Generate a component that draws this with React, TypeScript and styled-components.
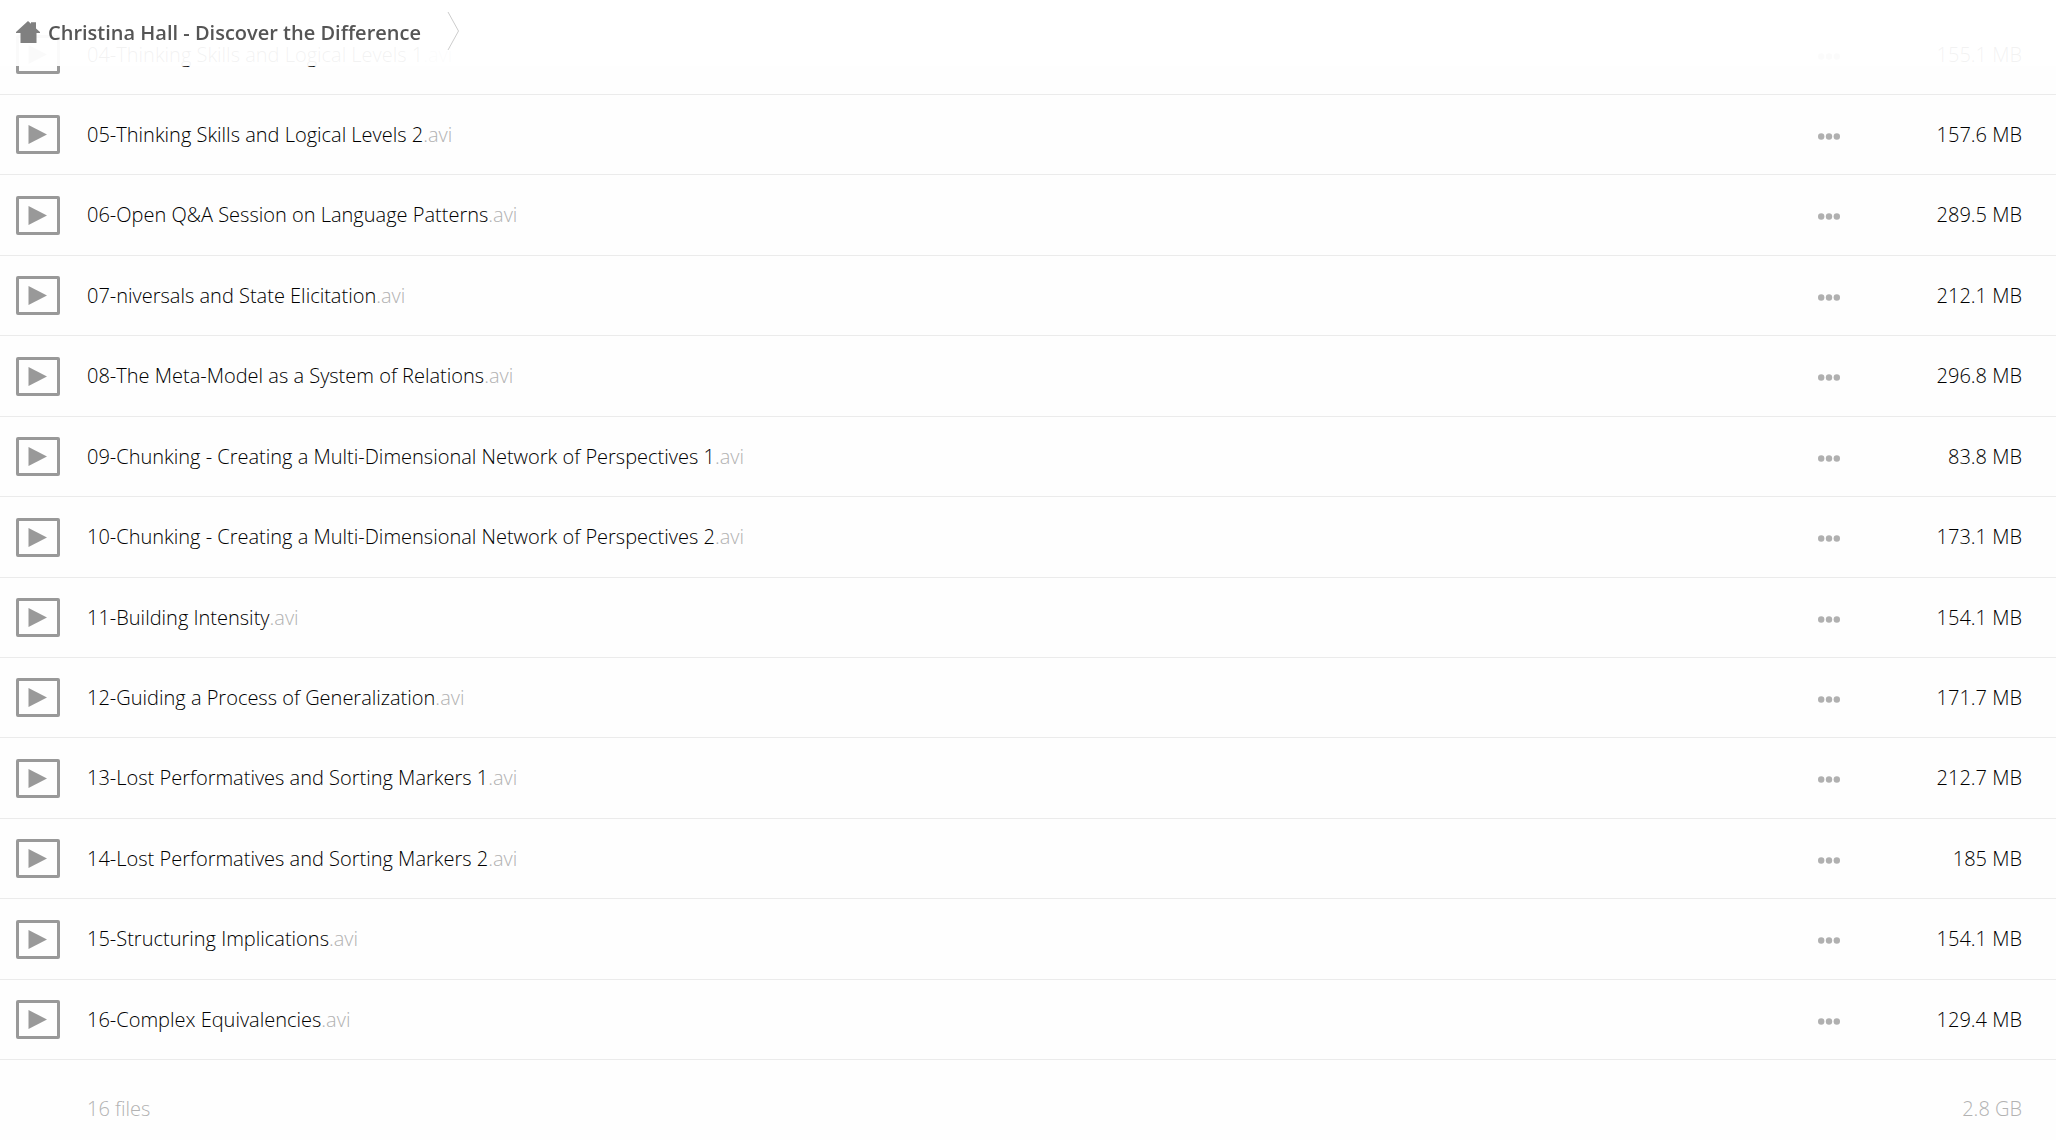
import React from 'react';
import styled, { createGlobalStyle } from 'styled-components';

const GlobalStyle = createGlobalStyle`
  * {
    box-sizing: border-box;
  }

  body {
    margin: 0;
    background: #fefefe;
    color: #000;
    font-family: 'Open Sans', 'Noto Sans', sans-serif;
    font-size: 20px;
    font-weight: 300;
    line-height: 28px;
  }
`;

const Header = styled.header`
  position: fixed;
  top: 0;
  left: 0;
  right: 0;
  z-index: 1;
  height: 66px;
  padding: 12px 16px;
  background: rgba(255, 255, 255, 0.95);
`;

const Breadcrumb = styled.nav`
  display: flex;
  align-items: flex-start;
  gap: 26px;
`;

const Crumb = styled.a`
  display: flex;
  align-items: center;
  gap: 8px;
  padding-top: 7px;
  color: #555;
  font-weight: 600;
  text-decoration: none;
`;

const Main = styled.main`
  padding-top: 15px;
`;

const FileTable = styled.table`
  width: 100%;
  table-layout: fixed;
  border-collapse: separate;
  border-spacing: 0;
`;

const IconColumn = styled.col`
  width: 87px;
`;

const MenuColumn = styled.col`
  width: 60px;
`;

const SizeColumn = styled.col`
  width: 197px;
`;

const FileRow = styled.tr`
  height: 80px;

  &:nth-child(3),
  &:nth-child(5n),
  &:nth-child(5n + 7) {
    height: 81px;
  }

  > td {
    border-bottom: 1px solid #ebebeb;
  }
`;

const SummaryRow = styled.tr`
  height: 98px;
  color: #b2b2b2;
`;

const Cell = styled.td<{ $align?: 'left' | 'center' | 'right' }>`
  padding: 0;
  text-align: ${({ $align = 'left' }) => $align};
  vertical-align: middle;
  white-space: nowrap;
`;

const IconCell = styled(Cell)`
  padding-left: 16px;
`;

const SizeCell = styled(Cell)`
  padding-right: 34px;
`;

const Extension = styled.span`
  color: #b2b2b2;
`;

const MenuButton = styled.button`
  display: inline-flex;
  align-items: flex-end;
  justify-content: center;
  width: 44px;
  height: 32px;
  padding: 0 0 11px;
  border: 0;
  background: none;
  cursor: pointer;
  vertical-align: middle;
`;

const Glyph = styled.svg`
  display: block;
  flex: none;
`;

const HomeIcon = () => (
  <Glyph width="24" height="24" viewBox="0 0 24 24" fill="#808080" aria-hidden="true">
    <path d="M12 0 15 2.7V1.3h5v6.2L24 11v1h-3.5v10h-16V12H0v-1z" />
  </Glyph>
);

const Separator = () => (
  <Glyph width="13" height="39" viewBox="0 0 13 39" fill="none" stroke="#ccc" aria-hidden="true">
    <path d="M1 0 11.5 19 1 38" />
  </Glyph>
);

const VideoIcon = () => (
  <Glyph width="44" height="39" viewBox="0 0 44 39" aria-hidden="true">
    <rect x="1.5" y="1.5" width="41" height="36" rx="0.5" fill="none" stroke="#999" strokeWidth="3" />
    <path d="M12.5 10 31 19.5 12.5 29z" fill="#999" />
  </Glyph>
);

const DotsIcon = () => (
  <Glyph width="22" height="7" viewBox="0 0 22 7" fill="#b0b0b0" aria-hidden="true">
    <circle cx="3.2" cy="3.5" r="3.2" />
    <circle cx="11" cy="3.5" r="3.2" />
    <circle cx="18.8" cy="3.5" r="3.2" />
  </Glyph>
);

const files = [
  { name: '04-Thinking Skills and Logical Levels 1', size: '155.1 MB' },
  { name: '05-Thinking Skills and Logical Levels 2', size: '157.6 MB' },
  { name: '06-Open Q&A Session on Language Patterns', size: '289.5 MB' },
  { name: '07-niversals and State Elicitation', size: '212.1 MB' },
  { name: '08-The Meta-Model as a System of Relations', size: '296.8 MB' },
  { name: '09-Chunking - Creating a Multi-Dimensional Network of Perspectives 1', size: '83.8 MB' },
  { name: '10-Chunking - Creating a Multi-Dimensional Network of Perspectives 2', size: '173.1 MB' },
  { name: '11-Building Intensity', size: '154.1 MB' },
  { name: '12-Guiding a Process of Generalization', size: '171.7 MB' },
  { name: '13-Lost Performatives and Sorting Markers 1', size: '212.7 MB' },
  { name: '14-Lost Performatives and Sorting Markers 2', size: '185 MB' },
  { name: '15-Structuring Implications', size: '154.1 MB' },
  { name: '16-Complex Equivalencies', size: '129.4 MB' },
];

export default function App() {
  return (
    <>
      <GlobalStyle />
      <Header>
        <Breadcrumb aria-label="Breadcrumb">
          <Crumb href="#">
            <HomeIcon />
            Christina Hall - Discover the Difference
          </Crumb>
          <Separator />
        </Breadcrumb>
      </Header>
      <Main>
        <FileTable>
          <colgroup>
            <IconColumn />
            <col />
            <MenuColumn />
            <SizeColumn />
          </colgroup>
          <tbody>
            {files.map(({ name, size }) => (
              <FileRow key={name}>
                <IconCell>
                  <VideoIcon />
                </IconCell>
                <Cell>
                  {name}
                  <Extension>.avi</Extension>
                </Cell>
                <Cell $align="center">
                  <MenuButton type="button" aria-label="File actions">
                    <DotsIcon />
                  </MenuButton>
                </Cell>
                <SizeCell $align="right">{size}</SizeCell>
              </FileRow>
            ))}
          </tbody>
          <tfoot>
            <SummaryRow>
              <Cell />
              <Cell colSpan={2}>16 files</Cell>
              <SizeCell $align="right">2.8 GB</SizeCell>
            </SummaryRow>
          </tfoot>
        </FileTable>
      </Main>
    </>
  );
}
